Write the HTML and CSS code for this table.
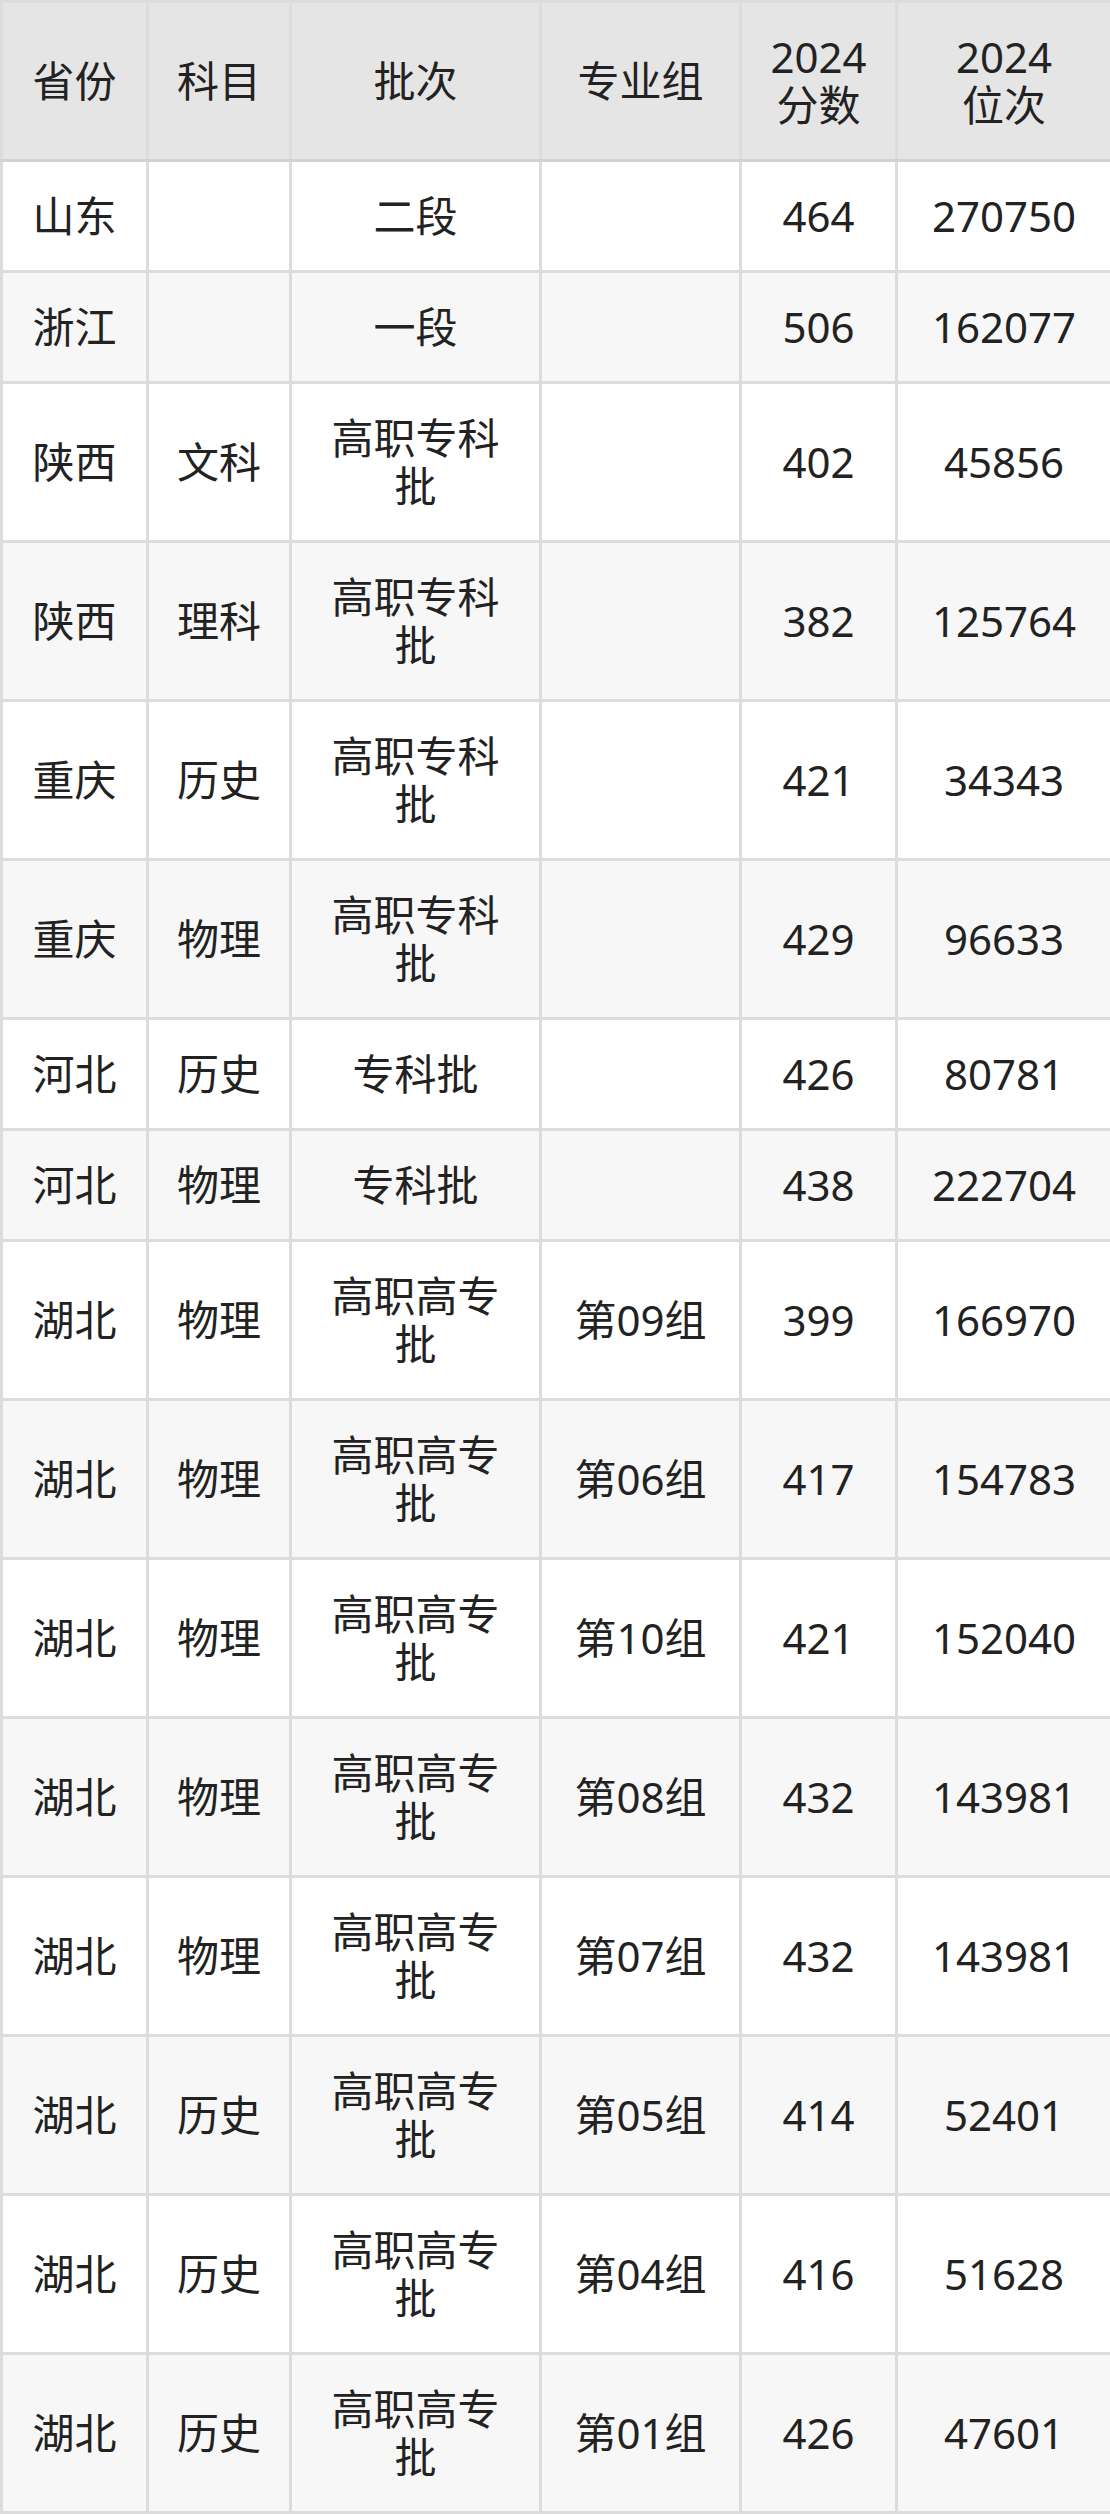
FILE: index.html
```html
<!DOCTYPE html>
<html lang="zh-CN">
<head>
<meta charset="utf-8">
<title>2024 分数位次</title>
<link rel="stylesheet" href="styles.css">
</head>
<body>
<table class="score-table">
  <colgroup>
    <col class="c-prov">
    <col class="c-subj">
    <col class="c-batch">
    <col class="c-group">
    <col class="c-score">
    <col class="c-rank">
  </colgroup>
  <thead>
    <tr>
      <th>省份</th>
      <th>科目</th>
      <th>批次</th>
      <th>专业组</th>
      <th><span class="stack">2024 分数</span></th>
      <th><span class="stack">2024 位次</span></th>
    </tr>
  </thead>
  <tbody>
    <tr><td>山东</td><td></td><td>二段</td><td></td><td>464</td><td>270750</td></tr>
    <tr><td>浙江</td><td></td><td>一段</td><td></td><td>506</td><td>162077</td></tr>
    <tr><td>陕西</td><td>文科</td><td>高职专科批</td><td></td><td>402</td><td>45856</td></tr>
    <tr><td>陕西</td><td>理科</td><td>高职专科批</td><td></td><td>382</td><td>125764</td></tr>
    <tr><td>重庆</td><td>历史</td><td>高职专科批</td><td></td><td>421</td><td>34343</td></tr>
    <tr><td>重庆</td><td>物理</td><td>高职专科批</td><td></td><td>429</td><td>96633</td></tr>
    <tr><td>河北</td><td>历史</td><td>专科批</td><td></td><td>426</td><td>80781</td></tr>
    <tr><td>河北</td><td>物理</td><td>专科批</td><td></td><td>438</td><td>222704</td></tr>
    <tr><td>湖北</td><td>物理</td><td>高职高专批</td><td>第09组</td><td>399</td><td>166970</td></tr>
    <tr><td>湖北</td><td>物理</td><td>高职高专批</td><td>第06组</td><td>417</td><td>154783</td></tr>
    <tr><td>湖北</td><td>物理</td><td>高职高专批</td><td>第10组</td><td>421</td><td>152040</td></tr>
    <tr><td>湖北</td><td>物理</td><td>高职高专批</td><td>第08组</td><td>432</td><td>143981</td></tr>
    <tr><td>湖北</td><td>物理</td><td>高职高专批</td><td>第07组</td><td>432</td><td>143981</td></tr>
    <tr><td>湖北</td><td>历史</td><td>高职高专批</td><td>第05组</td><td>414</td><td>52401</td></tr>
    <tr><td>湖北</td><td>历史</td><td>高职高专批</td><td>第04组</td><td>416</td><td>51628</td></tr>
    <tr><td>湖北</td><td>历史</td><td>高职高专批</td><td>第01组</td><td>426</td><td>47601</td></tr>
  </tbody>
</table>
</body>
</html>
```
FILE: styles.css
```css
html, body {
  margin: 0;
  padding: 0;
  background: #ffffff;
}

.score-table {
  width: 1110px;
  table-layout: fixed;
  border-collapse: collapse;
  border: 3px solid #dadada;
  font-family: "Noto Sans", "Noto Sans CJK SC", sans-serif;
  font-size: 42px;
  line-height: 48px;
  color: #222222;
}

.c-prov { width: 146px; }
.c-subj { width: 143px; }
.c-batch { width: 250px; }
.c-group { width: 200px; }
.c-score { width: 156px; }
.c-rank { width: 215px; }

.score-table th,
.score-table td {
  border: 3px solid #dcdcdc;
  padding: 30px 24px;
  text-align: center;
  vertical-align: middle;
  font-weight: normal;
  overflow: hidden;
}

.score-table th {
  background: #e5e5e5;
  border-bottom-color: #d2d2d2;
}

.stack {
  display: inline-block;
  width: 104px;
  text-align: center;
  vertical-align: middle;
}

.score-table tbody tr:nth-child(odd) td {
  background: #ffffff;
}

.score-table tbody tr:nth-child(even) td {
  background: #f7f7f7;
}
```
